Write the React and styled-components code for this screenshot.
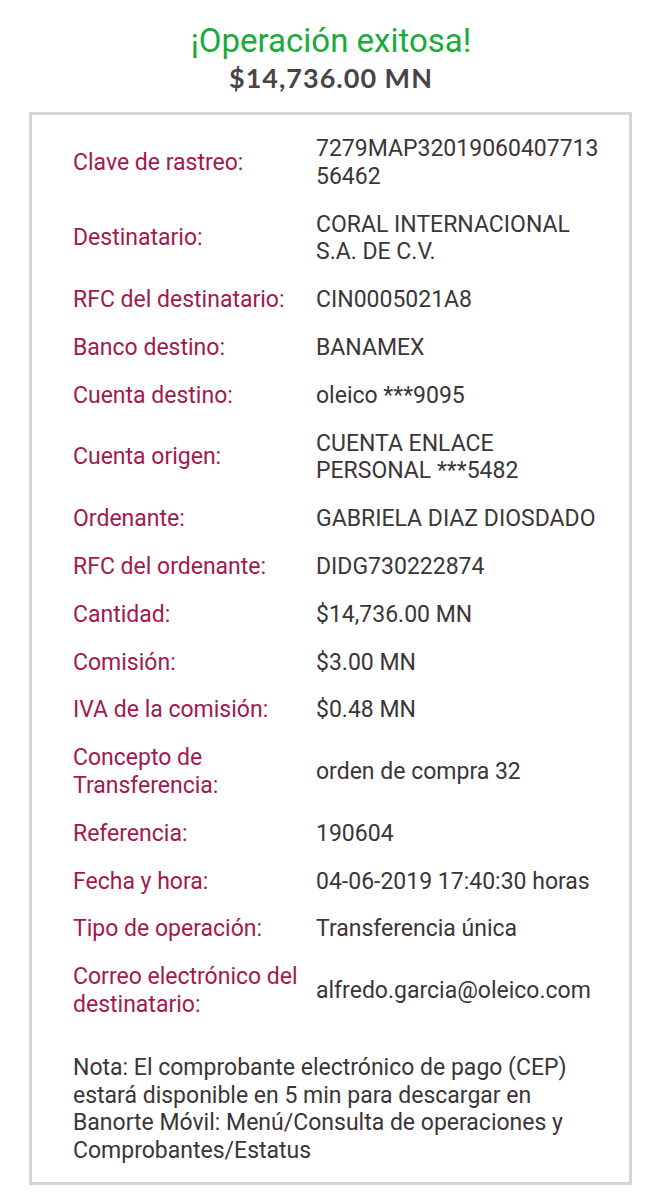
import styled, { createGlobalStyle } from 'styled-components';

const GlobalStyle = createGlobalStyle`
  html, body {
    margin: 0;
    padding: 0;
    background: #fff;
  }
  body {
    font-family: Roboto, 'Liberation Sans', sans-serif;
  }
`;

const rows = [
  ['Clave de rastreo:', '7279MAP32019060407713\n56462'],
  ['Destinatario:', 'CORAL INTERNACIONAL\nS.A. DE C.V.'],
  ['RFC del destinatario:', 'CIN0005021A8'],
  ['Banco destino:', 'BANAMEX'],
  ['Cuenta destino:', 'oleico ***9095'],
  ['Cuenta origen:', 'CUENTA ENLACE\nPERSONAL ***5482'],
  ['Ordenante:', 'GABRIELA DIAZ DIOSDADO'],
  ['RFC del ordenante:', 'DIDG730222874'],
  ['Cantidad:', '$14,736.00 MN'],
  ['Comisión:', '$3.00 MN'],
  ['IVA de la comisión:', '$0.48 MN'],
  ['Concepto de\nTransferencia:', 'orden de compra 32'],
  ['Referencia:', '190604'],
  ['Fecha y hora:', '04-06-2019 17:40:30 horas'],
  ['Tipo de operación:', 'Transferencia única'],
  ['Correo electrónico del\ndestinatario:', 'alfredo.garcia@oleico.com'],
];

const App = () => {
  return (
    <Page>
      <GlobalStyle />
      <Header>
        <Title>¡Operación exitosa!</Title>
        <Amount>$14,736.00 MN</Amount>
      </Header>
      <Receipt>
        <Details>
          {rows.map(([label, value]) => (
            <Row key={label}>
              <Label>{label}</Label>
              <Value>{value}</Value>
            </Row>
          ))}
        </Details>
        <Note>
          Nota: El comprobante electrónico de pago (CEP) estará disponible en 5
          min para descargar en Banorte Móvil: Menú/Consulta de operaciones y
          Comprobantes/Estatus
        </Note>
      </Receipt>
    </Page>
  );
};

export default App;

const Page = styled.div`
  width: 662px;
  min-height: 1199px;
  padding: 21px 0 0;
  box-sizing: border-box;
`;

const Header = styled.div`
  display: flex;
  flex-direction: column;
  align-items: center;
`;

const Title = styled.h1`
  margin: 0;
  font-family: Roboto, sans-serif;
  font-weight: 400;
  font-size: 33px;
  line-height: 40px;
  color: #1aab3c;
`;

const Amount = styled.h2`
  margin: 0;
  font-family: Lato, sans-serif;
  font-weight: 700;
  font-size: 27px;
  line-height: 34px;
  letter-spacing: 1px;
  color: #4a4446;
`;

const Receipt = styled.div`
  margin: 17px 30px 0 29px;
  border: 3px solid #d5d5d5;
  padding: 10px 18px 17px 41px;
`;

const Details = styled.div`
  display: flex;
  flex-direction: column;
`;

const Row = styled.div`
  display: grid;
  grid-template-columns: 243px 1fr;
  align-items: center;
  padding: 10.2px 0;
`;

const Label = styled.div`
  font-size: 23px;
  line-height: 27.5px;
  color: #a3194f;
  white-space: pre-line;
`;

const Value = styled.div`
  font-size: 23px;
  line-height: 27.5px;
  color: #3b3538;
  white-space: pre-line;
`;

const Note = styled.p`
  margin: 25.5px 0 0;
  padding-right: 9px;
  font-size: 23px;
  line-height: 27.7px;
  color: #3b3538;
`;
